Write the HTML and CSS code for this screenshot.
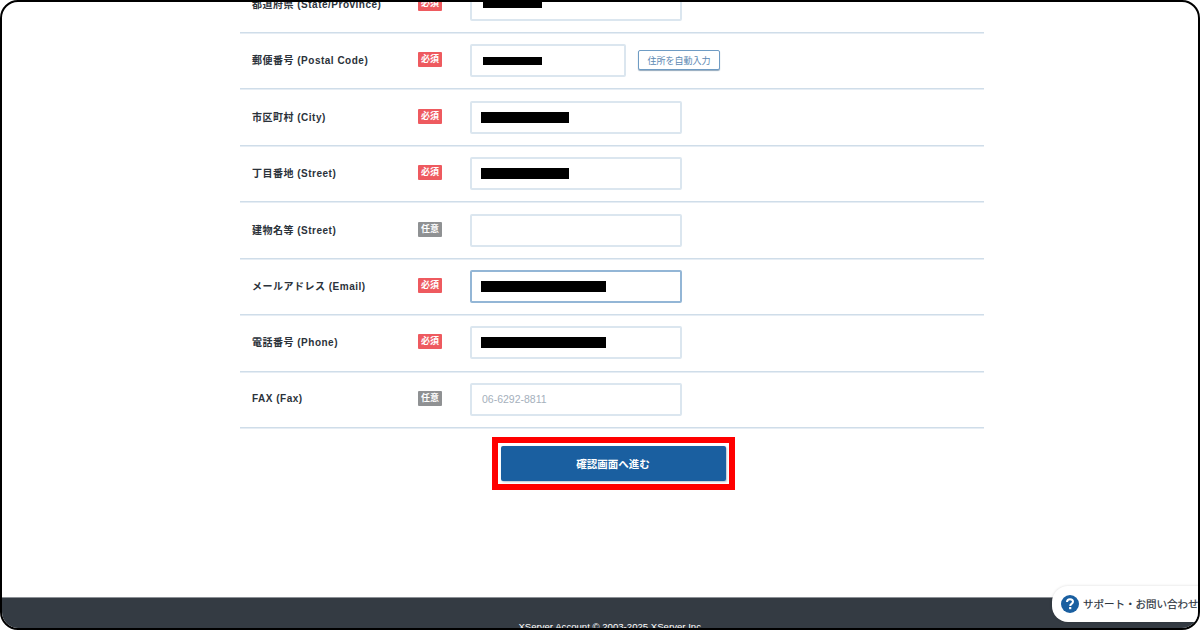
FILE: index.html
```html
<!DOCTYPE html>
<html lang="ja">
<head>
  <title>XServer Account</title>
  <meta charset="UTF-8" />
  <link rel="stylesheet" href="styles.css">
</head>
<body>
  <div class="frame">
    <main class="content">
      <div class="form">
        <div class="row">
          <div class="label">都道府県 (State/Province)</div>
          <div><span class="badge req">必須</span></div>
          <div class="field"><div class="input"><span class="mask mask-short"></span></div></div>
        </div>
        <div class="row">
          <div class="label">郵便番号 (Postal Code)</div>
          <div><span class="badge req">必須</span></div>
          <div class="field">
            <div class="input input-postal"><span class="mask mask-short"></span></div>
            <button class="auto-btn">住所を自動入力</button>
          </div>
        </div>
        <div class="row">
          <div class="label">市区町村 (City)</div>
          <div><span class="badge req">必須</span></div>
          <div class="field"><div class="input"><span class="mask mask-mid"></span></div></div>
        </div>
        <div class="row">
          <div class="label">丁目番地 (Street)</div>
          <div><span class="badge req">必須</span></div>
          <div class="field"><div class="input"><span class="mask mask-mid"></span></div></div>
        </div>
        <div class="row">
          <div class="label">建物名等 (Street)</div>
          <div><span class="badge opt">任意</span></div>
          <div class="field"><div class="input"></div></div>
        </div>
        <div class="row">
          <div class="label">メールアドレス (Email)</div>
          <div><span class="badge req">必須</span></div>
          <div class="field"><div class="input input-focus"><span class="mask mask-long"></span></div></div>
        </div>
        <div class="row">
          <div class="label">電話番号 (Phone)</div>
          <div><span class="badge req">必須</span></div>
          <div class="field"><div class="input"><span class="mask mask-long"></span></div></div>
        </div>
        <div class="row">
          <div class="label">FAX (Fax)</div>
          <div><span class="badge opt">任意</span></div>
          <div class="field"><div class="input placeholder">06-6292-8811</div></div>
        </div>
      </div>
      <div class="submit-mark">
        <button class="submit">確認画面へ進む</button>
      </div>
    </main>
    <footer class="footer">XServer Account © 2003-2025 XServer Inc.</footer>
    <div class="support">
      <svg class="support-icon" viewBox="0 0 18 18" width="18" height="18">
        <circle cx="9" cy="9" r="9" fill="#1a5fa0"/>
        <path d="M6 7 C6 5.2 7.3 4.2 9 4.2 C10.8 4.2 12 5.3 12 6.8 C12 8.9 9.2 8.9 9.2 10.9" fill="none" stroke="#fff" stroke-width="2"/>
        <rect x="8.1" y="12" width="2.2" height="2.2" fill="#fff"/>
      </svg>
      <span class="support-text">サポート・お問い合わせ</span>
    </div>
  </div>
</body>
</html>
```
FILE: styles.css
```css
* {
  box-sizing: border-box;
}
html, body {
  margin: 0;
  padding: 0;
  background: #fff;
}
body {
  font-family: "Liberation Sans", "Noto Sans CJK JP", sans-serif;
  color: #2b323a;
}
.frame {
  position: relative;
  display: flex;
  flex-direction: column;
  width: 1200px;
  height: 630px;
  border: 2px solid #000;
  border-radius: 18px;
  overflow: hidden;
  background: #fff;
}
.content {
  flex: 1;
  padding-left: 24px;
  min-height: 0;
}
.form {
  width: 744px;
  margin: -25.4px auto 0;
}
.row {
  display: grid;
  grid-template-columns: 178px 52px 1fr;
  align-items: center;
  height: 56.45px;
  border-bottom: 1px solid #cfdde9;
  box-shadow: 0 1px 0 #e6edf4;
}
.label {
  margin-top: -2px;
  padding-left: 12px;
  font-size: 10px;
  font-weight: bold;
  letter-spacing: 0.5px;
  white-space: nowrap;
}
.badge {
  display: block;
  width: 24px;
  height: 15px;
  margin-top: -2px;
  border-radius: 1px;
  color: #fff;
  font-size: 9px;
  font-weight: bold;
  line-height: 15px;
  text-align: center;
}
.req {
  background: #ee5a5f;
}
.opt {
  background: #8f9193;
}
.field {
  display: flex;
  align-items: center;
  gap: 12px;
}
.input {
  display: flex;
  align-items: center;
  width: 212px;
  height: 33px;
  padding-left: 9px;
  background: #fff;
  border: 2px solid #dbe6ef;
  border-radius: 2px;
}
.input-postal {
  width: 156px;
}
.input-focus {
  border-color: #93b6d6;
}
.placeholder {
  padding-left: 10px;
  color: #a5b0bc;
  font-size: 10.5px;
}
.mask {
  display: block;
  height: 11px;
  background: #000;
}
.mask-short {
  width: 59px;
  height: 8px;
  margin-left: 2px;
}
.mask-mid {
  width: 88px;
}
.mask-long {
  width: 125px;
}
.auto-btn {
  width: 82px;
  height: 20px;
  margin-top: -1px;
  padding: 0;
  background: #fff;
  border: 1px solid #6f9cc4;
  border-radius: 2px;
  box-shadow: 0 1px 1px #93a9bd;
  color: #5b88b2;
  font-family: inherit;
  font-size: 9px;
}
.submit-mark {
  position: relative;
  left: 1px;
  width: 243px;
  height: 53px;
  margin: 9px auto 0;
  padding: 3px;
  border: 6px solid #f00;
}
.submit {
  display: block;
  width: 100%;
  height: 100%;
  padding: 0;
  background: #1a5fa0;
  border: 0;
  border-radius: 2px;
  box-shadow: 1px 1px 2px #b4c3d0;
  color: #fff;
  font-family: inherit;
  font-size: 10.5px;
  font-weight: bold;
}
.footer {
  height: 31px;
  flex: none;
  padding-top: 23px;
  background: #343b43;
  border-top: 1px solid #8c9095;
  color: #fff;
  font-size: 9.6px;
  line-height: 11px;
  text-align: center;
  text-indent: 22px;
}
.support {
  position: absolute;
  top: 584px;
  left: 1050px;
  display: flex;
  align-items: center;
  gap: 4px;
  width: 170px;
  height: 36px;
  padding-left: 9px;
  background: #fff;
  border-radius: 16px 0 0 16px;
  box-shadow: 0 0 3px rgba(0, 0, 0, 0.15);
}
.support-icon {
  flex: none;
}
.support-text {
  margin-top: -2px;
  font-size: 10.5px;
  color: #2f373f;
  -webkit-text-stroke: 0.2px #2f373f;
  white-space: nowrap;
}
```
